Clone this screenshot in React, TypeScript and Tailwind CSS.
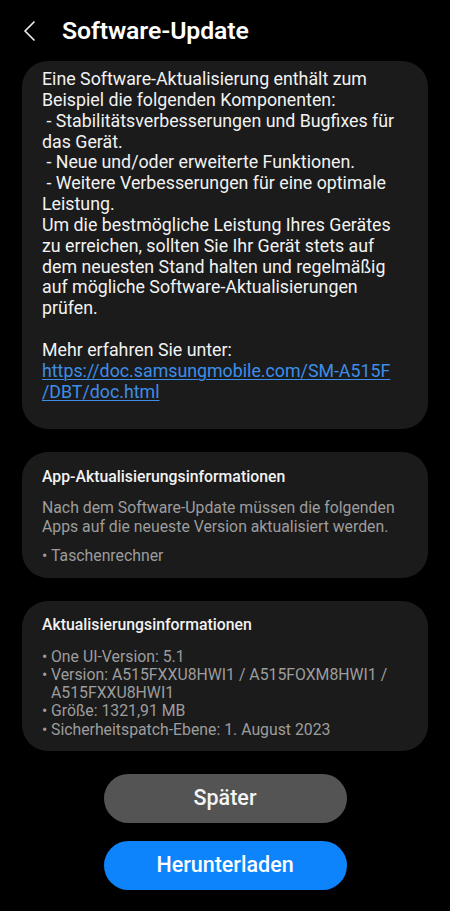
import React from 'react';

const font = { fontFamily: 'Roboto, "Noto Sans", "Liberation Sans", sans-serif' };

const introLines = [
  'Eine Software-Aktualisierung enthält zum',
  'Beispiel die folgenden Komponenten:',
  '\u00a0- Stabilitätsverbesserungen und Bugfixes für',
  'das Gerät.',
  '\u00a0- Neue und/oder erweiterte Funktionen.',
  '\u00a0- Weitere Verbesserungen für eine optimale',
  'Leistung.',
  'Um die bestmögliche Leistung Ihres Gerätes',
  'zu erreichen, sollten Sie Ihr Gerät stets auf',
  'dem neuesten Stand halten und regelmäßig',
  'auf mögliche Software-Aktualisierungen',
  'prüfen.',
];

const infoItems = [
  'One UI-Version: 5.1',
  'Version: A515FXXU8HWI1 / A515FOXM8HWI1 / A515FXXU8HWI1',
  'Größe: 1321,91 MB',
  'Sicherheitspatch-Ebene: 1. August 2023',
];

const Bullet: React.FC<{ children: React.ReactNode }> = ({ children }) => (
  <div className="flex">
    <span className="w-[9px] shrink-0">•</span>
    <span>{children}</span>
  </div>
);

export default function App() {
  return (
    <div className="min-h-[911px] w-[450px] bg-black text-[#f2f2f2]" style={font}>
      <header className="flex items-center h-[61px] pl-[22px]">
        <svg width="16" height="22" viewBox="0 0 16 22" fill="none" className="mt-[1px]">
          <path d="M12 2 L3 11 L12 20" stroke="#ededed" strokeWidth="1.7" strokeLinecap="round" strokeLinejoin="round" />
        </svg>
        <h1 className="ml-[24px] text-[24.8px] font-semibold tracking-[-0.1px] text-white">Software-Update</h1>
      </header>

      <div className="mx-[22px] flex flex-col">
        <section className="rounded-[26px] bg-[#1b1b1b] pl-[20px] pr-[8px] pt-[8px] pb-[26px] text-[17.8px] leading-[20.85px] whitespace-nowrap">
          {introLines.map((l, i) => (
            <div key={i}>{l}</div>
          ))}
          <div className="h-[20.85px]" />
          <div>Mehr erfahren Sie unter:</div>
          <a className="block text-[#3d8ee8] underline underline-offset-2 decoration-1">
            https://doc.samsungmobile.com/SM-A515F
            <br />
            /DBT/doc.html
          </a>
        </section>

        <section className="mt-[23px] rounded-[26px] bg-[#1b1b1b] pl-[20px] pr-[14px] pt-[15px] pb-[13px]">
          <h2 className="text-[15.8px] leading-[20px] font-medium text-[#f2f2f2]">App-Aktualisierungsinformationen</h2>
          <p className="mt-[11px] text-[15.8px] leading-[19px] text-[#9d9d9d]">
            Nach dem Software-Update müssen die folgenden Apps auf die neueste Version aktualisiert werden.
          </p>
          <div className="mt-[10px] text-[15.8px] leading-[19px] text-[#9d9d9d]">
            <Bullet>Taschenrechner</Bullet>
          </div>
        </section>

        <section className="mt-[23px] rounded-[26px] bg-[#1b1b1b] pl-[20px] pr-[14px] pt-[14px] pb-[12px]">
          <h2 className="text-[15.8px] leading-[20px] font-medium text-[#f2f2f2]">Aktualisierungsinformationen</h2>
          <div className="mt-[13px] text-[15.8px] leading-[18.3px] text-[#9d9d9d]">
            {infoItems.map((t) => (
              <Bullet key={t}>{t}</Bullet>
            ))}
          </div>
        </section>

        <div className="mt-[23px] flex flex-col items-center gap-[18px]">
          <button className="h-[49px] w-[243px] rounded-full bg-[#545454] text-[21.5px] font-medium text-[#f4f4f4]">
            Später
          </button>
          <button className="h-[49px] w-[243px] rounded-full bg-[#0d84fb] text-[21.5px] font-medium text-white">
            Herunterladen
          </button>
        </div>
      </div>
    </div>
  );
}
